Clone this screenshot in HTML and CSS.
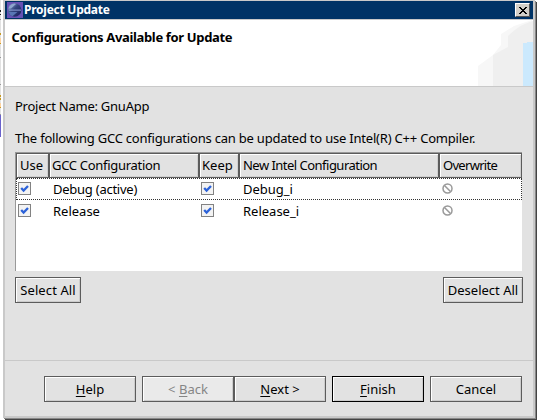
FILE: index.html
```html
<!DOCTYPE html>
<html lang="en">
<head>
<meta charset="utf-8">
<title>Project Update</title>
<link rel="stylesheet" href="styles.css">
</head>
<body>
<svg class="behind" width="2" height="420" viewBox="0 0 2 420" shape-rendering="crispEdges">
  <rect width="2" height="420" fill="#fff"/>
  <rect width="1" height="136" fill="#e2e2e2"/>
  <path d="M0 10h1v2H0zM0 14h1v1H0z" fill="#222"/>
  <path d="M0 19h1v1H0zM0 57h1v1H0zM0 84h1v1H0zM0 114h1v1H0z" fill="#999"/>
  <path d="M0 33h1v2H0zM0 43h1v1H0zM0 95h1v2H0zM0 98h1v2H0zM0 107h1v1H0z" fill="#c79a22"/>
  <path d="M0 38h1v5H0zM0 103h1v4H0z" fill="#ffd3a0"/>
  <rect y="115" width="1" height="22" fill="#6a62cc"/>
</svg>
<main class="dialog">
  <header class="titlebar">
    <svg class="logo" width="16" height="16" viewBox="0 0 16 16">
      <defs><linearGradient id="ball" x1="0" y1="0" x2="1" y2="1"><stop offset="0" stop-color="#9db6dc"/><stop offset=".45" stop-color="#33457f"/><stop offset="1" stop-color="#191c58"/></linearGradient></defs>
      <rect width="16" height="16" fill="#6650b4"/>
      <circle cx="7.6" cy="8" r="6.8" fill="url(#ball)"/>
      <path d="M1.5 6.5Q3 2 7.5 1.6L9 2 4 6.5z" fill="#8ea6cf"/>
      <path d="M2 7.6h12v1H2z" fill="#8d9fd4"/>
      <path d="M1.4 10h9l-5 4.2Q2.4 13 1.4 10z" fill="#5876b4"/>
    </svg>
    <h1>Project Update</h1>
    <button class="close" aria-label="Close"><svg width="8" height="7" viewBox="0 0 8 7" shape-rendering="crispEdges"><path d="M0 0h2v1h1v1h2V1h1V0h2v1H7v1H6v1H5v1h1v1h1v1h1v1H6V6H5V5H3v1H2v1H0V6h1V5h1V4h1V3H2V2H1V1H0z"/></svg></button>
  </header>
  <section class="banner">
    <h2>Configurations Available for Update</h2>
    <svg width="55" height="66" viewBox="0 0 55 66">
      <path d="M0 66V46L15 35l8-10V14L36 6 54 0v66z" fill="#f7f7f7"/>
      <path d="M15 66V35l15-8V16C37 9 44 4 55 1v65z" fill="#efefef"/>
      <path d="M45 66V23h4v-1h6v44z" fill="#cbe9fd"/>
    </svg>
  </section>
  <section class="content">
    <p class="project">Project Name: GnuApp</p>
    <p class="intro">The following GCC configurations can be updated to use Intel(R) C++ Compiler.</p>
    <div class="table">
      <div class="head cols">
        <span>Use</span><span class="h-gcc">GCC Configuration</span><span>Keep</span><span class="h-new">New Intel Configuration</span><span class="h-over">Overwrite</span>
      </div>
      <div class="row cols focused">
        <i class="check"><svg width="9" height="9" viewBox="0 0 9 9"><path d="M1.2 4l2.4 2.6L8 2" /></svg></i>
        <span class="active">Debug (active)</span>
        <i class="check"><svg width="9" height="9" viewBox="0 0 9 9"><path d="M1.2 4l2.4 2.6L8 2" /></svg></i>
        <span>Debug_i</span>
        <svg class="ban" width="11" height="11" viewBox="0 0 11 11"><circle cx="5.5" cy="5.5" r="4.5"/><path d="M2.5 2.5l6 6"/></svg>
      </div>
      <div class="row cols">
        <i class="check"><svg width="9" height="9" viewBox="0 0 9 9"><path d="M1.2 4l2.4 2.6L8 2" /></svg></i>
        <span>Release</span>
        <i class="check"><svg width="9" height="9" viewBox="0 0 9 9"><path d="M1.2 4l2.4 2.6L8 2" /></svg></i>
        <span>Release_i</span>
        <svg class="ban" width="11" height="11" viewBox="0 0 11 11"><circle cx="5.5" cy="5.5" r="4.5"/><path d="M2.5 2.5l6 6"/></svg>
      </div>
    </div>
    <div class="selection">
      <button class="btn select">Select All</button>
      <button class="btn deselect">Deselect All</button>
    </div>
  </section>
  <footer class="actions">
    <button class="btn"><span><u>H</u>elp</span></button>
    <div class="pair">
      <button class="btn" disabled><span>&lt; <u>B</u>ack</span></button>
      <button class="btn"><span><u>N</u>ext &gt;</span></button>
    </div>
    <button class="btn default"><span><u>F</u>inish</span></button>
    <button class="btn">Cancel</button>
  </footer>
</main>
</body>
</html>
```

FILE: styles.css
```css
* { box-sizing: border-box; }
body {
  margin: 0;
  width: 537px;
  height: 420px;
  overflow: hidden;
  display: flex;
  background: #fff;
  font: 13px/18px "Noto Sans", "Open Sans", sans-serif;
  color: #000;
}
h1, h2, p { margin: 0; white-space: nowrap; }
.behind { flex: none; }
.dialog {
  flex: none;
  width: 532px;
  height: 418px;
  margin-left: 1px;
  display: flex;
  flex-direction: column;
  background: #e2e2e2;
  border: 2px solid #c9c9c9;
  border-top-width: 1px;
  box-shadow: 1px 1px 0 #888, 2px 2px 0 #444;
}
.titlebar {
  flex: none;
  height: 19px;
  padding: 1px 3px 0 2px;
  display: flex;
  align-items: flex-start;
  background: #003366;
  border-bottom: 1px solid #c9c9c9;
}
.titlebar h1 {
  margin-left: 1px;
  flex: 1;
  font: bold 12px/16px "Noto Sans", sans-serif;
  letter-spacing: -0.25px;
  color: #fff;
}
.close {
  width: 15px;
  height: 14px;
  margin-top: 1px;
  padding: 0;
  display: flex;
  align-items: center;
  justify-content: center;
  background: #d4d0c8;
  border: 1px solid #fff;
  border-right-color: #555;
  border-bottom-color: #555;
}
.banner {
  flex: none;
  height: 67px;
  display: flex;
  justify-content: space-between;
  background: #fff;
  border-bottom: 1px solid #c9c9c9;
}
.banner h2 {
  margin: 8px 0 0 6.5px;
  font: bold 13px/18px "Noto Sans", sans-serif;
  letter-spacing: -0.34px;
}
.content {
  flex: none;
  height: 273px;
  padding: 10px 10px 0;
}
.project { letter-spacing: -0.25px; }
.intro { margin-top: 14px; letter-spacing: -0.21px; }
.table {
  margin-top: 5px;
  width: 507px;
  height: 119px;
  background: #fff;
  border-top: 1px solid #999;
  border-left: 1px solid #999;
}
.cols {
  display: grid;
  grid-template-columns: 33px 150px 40px 200px 83px;
}
.head { height: 25px; }
.head span {
  padding: 3px 0 0 2px;
  white-space: nowrap;
  line-height: 17px;
  background: #e2e2e2;
  border: 1px solid #5c5c5c;
  box-shadow: inset 1px 1px #fff, inset -1px -1px #d0d0d0;
}
.head span:first-child { padding-left: 3px; }
.head .h-gcc { letter-spacing: -0.3px; }
.head .h-new { letter-spacing: -0.52px; padding-left: 3px; }
.head .h-over { letter-spacing: -0.7px; padding-left: 3px; }
.row {
  height: 22px;
  align-items: center;
  border: 1px solid transparent;
}
.row.cols { grid-template-columns: 32px 150px 40px 200px 82px; }
.focused {
  border: 1px dotted #333;
}
.row span { padding-left: 4px; white-space: nowrap; }
.row .active { letter-spacing: -0.25px; }
.check {
  width: 13px;
  height: 13px;
  margin-left: 1px;
  margin-top: -1px;
  padding: 1px;
  display: flex;
  border: 1px solid #828282;
  background: #f3f3f3;
}
span + .check { margin-left: 2px; }
.check path { fill: none; stroke: #2c62d8; stroke-width: 2.3; }
.ban { margin: -2px 0 0 3px; fill: none; stroke: #999; stroke-width: 1.5; }
.selection {
  margin-top: 6px;
  width: 508px;
  display: flex;
  justify-content: space-between;
}
.btn {
  width: 92px;
  height: 26px;
  padding: 0;
  font: inherit;
  color: #000;
  white-space: nowrap;
  background: #e2e2e2;
  border: 1px solid #5c5c5c;
  border-radius: 0;
  box-shadow: inset 1px 1px #fff, inset -1px -1px #ccc;
}
.btn u { text-underline-offset: 2px; }
.select { width: 66px; letter-spacing: 0.1px; }
.deselect { width: 80px; }
.btn:disabled { color: #858585; background: #eaeaea; }
.btn.default { border-color: #000; }
.actions {
  flex: 1;
  display: flex;
  gap: 6px;
  padding: 15px 0 0 39px;
  border-top: 1px solid #c9c9c9;
}
.pair { display: flex; }
```
